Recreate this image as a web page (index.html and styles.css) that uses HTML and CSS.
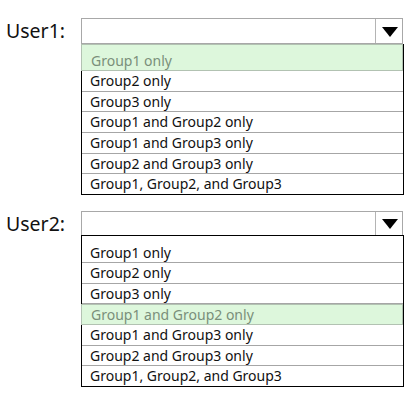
FILE: index.html
```html
<!DOCTYPE html>
<html>
<head>
<meta charset="utf-8">
<link rel="stylesheet" href="styles.css">
</head>
<body>
<div class="page">
  <div class="field field-1">
    <div class="label">User1:</div>
    <div class="combo">
      <div class="select">
        <div class="value"></div>
        <div class="arrow"><svg width="16" height="10" viewBox="0 0 16 10"><path d="M0 0H16L8 10Z" fill="#000"/></svg></div>
      </div>
      <div class="list">
        <div class="opt first sel">Group1 only</div>
        <div class="opt">Group2 only</div>
        <div class="opt">Group3 only</div>
        <div class="opt">Group1 and Group2 only</div>
        <div class="opt">Group1 and Group3 only</div>
        <div class="opt">Group2 and Group3 only</div>
        <div class="opt last">Group1, Group2, and Group3</div>
      </div>
    </div>
  </div>
  <div class="field field-2">
    <div class="label">User2:</div>
    <div class="combo">
      <div class="select">
        <div class="value"></div>
        <div class="arrow"><svg width="16" height="10" viewBox="0 0 16 10"><path d="M0 0H16L8 10Z" fill="#000"/></svg></div>
      </div>
      <div class="list list-2">
        <div class="opt first">Group1 only</div>
        <div class="opt">Group2 only</div>
        <div class="opt">Group3 only</div>
        <div class="opt sel">Group1 and Group2 only</div>
        <div class="opt">Group1 and Group3 only</div>
        <div class="opt">Group2 and Group3 only</div>
        <div class="opt last">Group1, Group2, and Group3</div>
      </div>
    </div>
  </div>
</div>
</body>
</html>
```
FILE: styles.css
```css
html, body {
  margin: 0;
  padding: 0;
  background: #fff;
}
body {
  width: 411px;
  height: 402px;
  overflow: hidden;
  font-family: "Noto Sans", "DejaVu Sans", sans-serif;
  color: #111;
}
.page {
  padding-top: 18px;
  display: flex;
  flex-direction: column;
  gap: 16px;
}
.field {
  display: flex;
  align-items: flex-start;
}
.label {
  width: 75px;
  padding-left: 6px;
  height: 26px;
  line-height: 26px;
  font-size: 19.5px;
  color: #111;
}
.combo {
  width: 322px;
  display: flex;
  flex-direction: column;
}
.select {
  box-sizing: border-box;
  height: 26px;
  border: 1px solid #a8a8a8;
  display: flex;
  background: #fff;
}
.field-2 .select {
  height: 25px;
}
.value {
  flex: 1;
}
.arrow {
  width: 25px;
  border-left: 1px solid #b4b4b4;
  display: flex;
  align-items: center;
  justify-content: center;
  padding-left: 1px;
  padding-top: 1px;
}
.list {
  border-left: 1px solid #000;
  border-right: 1px solid #000;
  border-bottom: 1px solid #000;
  margin-right: -1px;
}
.list-2 {
  border-top: 1px solid #000;
  margin-top: -1px;
}
.opt {
  box-sizing: border-box;
  height: 20.67px;
  line-height: 19px;
  border-bottom: 1px solid #a6a6a6;
  padding-left: 8px;
  font-size: 14px;
  white-space: nowrap;
}
.opt.first {
  height: 27px;
  padding-top: 7px;
}
.opt.last {
  border-bottom: none;
  height: 19.67px;
}
.opt.sel {
  background: #ddf7dc;
  color: #7a8f7a;
  border: 1px solid #b2c2b2;
  margin-left: -1px;
  margin-right: 0;
  padding-left: 9px;
}
.opt.sel.first {
  padding-top: 6px;
}
```
